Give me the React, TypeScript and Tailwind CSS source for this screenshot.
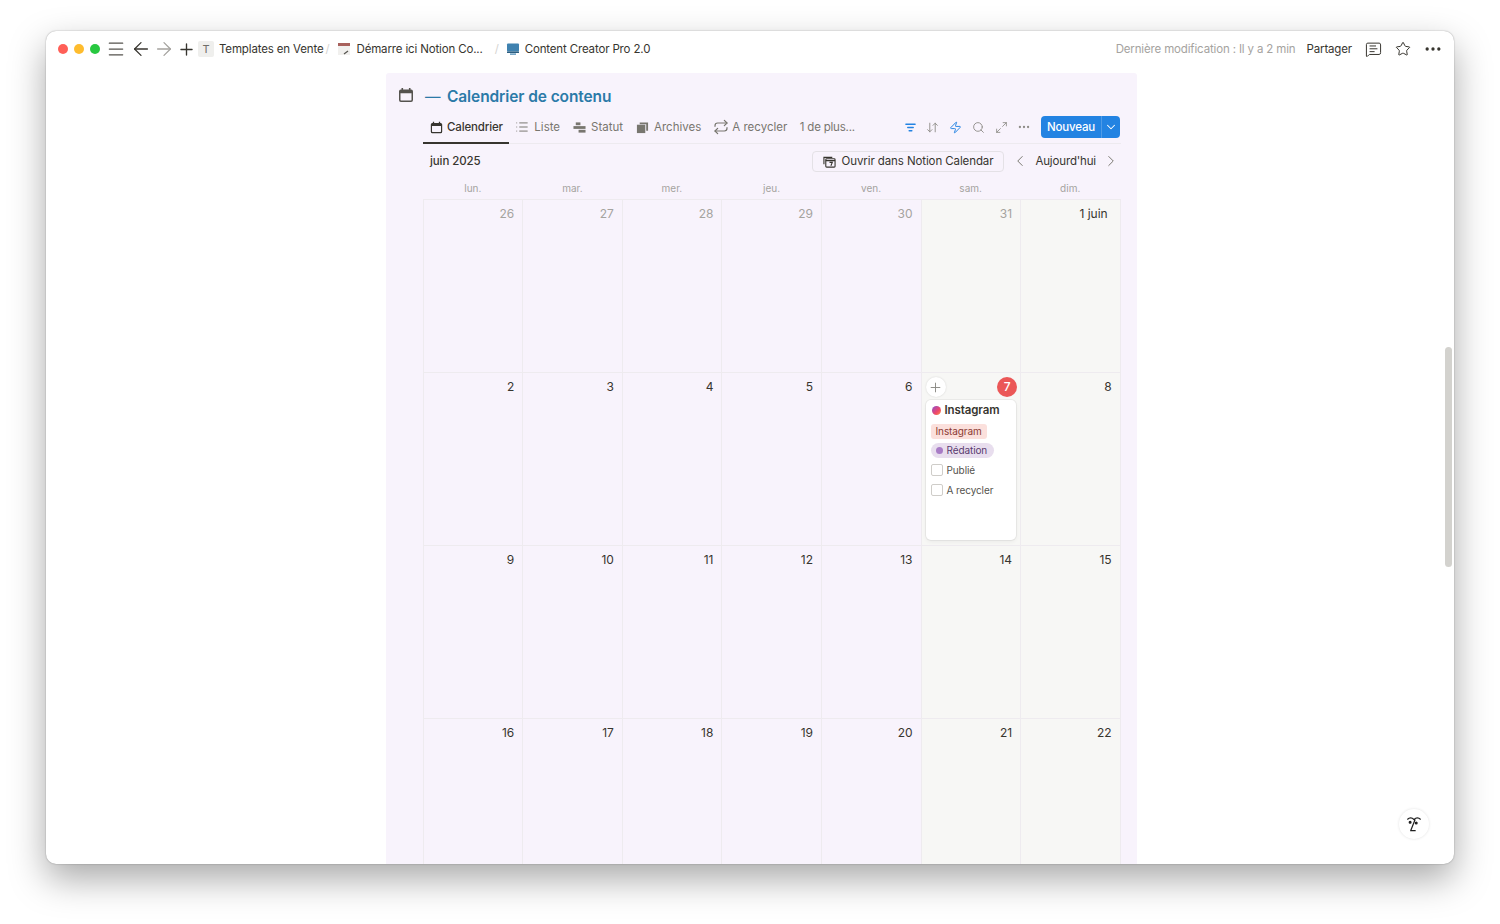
import { ChevronDown, ChevronLeft, ChevronRight, ArrowLeft, ArrowRight, Plus, Menu, Search, Star, MessageSquareText, Ellipsis, Zap, ArrowDownUp, Maximize2, Repeat, List } from 'lucide-react';

const weekDays = ['lun.', 'mar.', 'mer.', 'jeu.', 'ven.', 'sam.', 'dim.'];
const weeks = [
  ['26', '27', '28', '29', '30', '31', '1 juin'],
  ['2', '3', '4', '5', '6', '7', '8'],
  ['9', '10', '11', '12', '13', '14', '15'],
  ['16', '17', '18', '19', '20', '21', '22'],
];

function CalendarIcon({ className }: { className: string }) {
  return (
    <svg viewBox="0 0 16 16" className={className} fill="currentColor">
      <path d="M3.5 1h1.6v1.5h5.8V1h1.6v1.5h.6A1.9 1.9 0 0 1 15 4.4v8.7a1.9 1.9 0 0 1-1.9 1.9H2.9A1.9 1.9 0 0 1 1 13.1V4.4a1.9 1.9 0 0 1 1.9-1.9h.6V1Zm-1 5.2v6.8c0 .3.2.5.5.5h10c.3 0 .5-.2.5-.5V6.200H2.500Z" />
    </svg>
  );
}

function Tab({ icon, label, active }: { icon: React.ReactNode; label: string; active?: boolean }) {
  return (
    <div className={active ? 'relative flex h-[29px] items-center gap-[4px] pl-[7px] pr-[6px] pb-[3px] text-[#37352f]' : 'flex h-[29px] items-center gap-[5px] px-[6.5px] pb-[3px] tracking-normal text-[#78766f]'}>
      {icon}
      <span className={active ? 'pt-[1px] font-medium' : 'pt-[1px]'}>{label}</span>
      {active && <span className="absolute inset-x-0 -bottom-px h-[2px] bg-[#37352f]" />}
    </div>
  );
}

function DayCell({ label, col, row }: { label: string; col: number; row: number }) {
  const weekend = col >= 5;
  const muted = row === 0 && col < 6;
  const today = label === '7';
  return (
    <div className={`relative h-[173px] border-l border-b border-[#eeebef] ${weekend ? 'bg-[#f7f7f5]' : ''}`}>
      {today ? (
        <>
          <div className="flex items-center justify-between pl-[4px] pr-[3px] pt-[4px]">
            <span className="flex h-[20px] w-[20px] items-center justify-center rounded-full bg-white text-[#8a8983] shadow-[0_0_2px_rgba(0,0,0,0.15)]">
              <Plus size={15} strokeWidth={1.5} />
            </span>
            <span className="flex h-[20px] w-[20px] items-center justify-center rounded-full bg-[#eb5757] text-[12px] font-medium text-white">7</span>
          </div>
          <EventCard />
        </>
      ) : (
        <div className={`pt-[5px] text-right text-[12px] ${label === '1 juin' ? 'pr-[12px]' : 'pr-[8px]'} ${muted ? 'text-[#a5a39f]' : 'text-[#37352f]'}`}>{label}</div>
      )}
    </div>
  );
}

function EventCard() {
  return (
    <div className="mx-[4px] mt-[3px] h-[140px] rounded-[5px] bg-white px-[5px] pt-[2px] tracking-[-0.1px] shadow-[0_0_0_1px_rgba(15,15,15,0.05),0_2px_4px_rgba(15,15,15,0.05)]">
      <div className="flex items-center gap-[4px] pl-[1px]">
        <span className="h-[9px] w-[9px] rounded-full bg-[linear-gradient(135deg,#8a4fd0,#f0466a_60%,#f59a42)]" />
        <span className="text-[11.5px] font-semibold text-[#37352f]">Instagram</span>
      </div>
      <div className="mt-[5px] flex">
        <span className="rounded-[3px] bg-[#fbe0dc] px-[5px] text-[10px] leading-[15px] text-[#8b3a33]">Instagram</span>
      </div>
      <div className="mt-[4px] flex">
        <span className="flex items-center gap-[4px] rounded-full bg-[#e8deee] pl-[5px] pr-[7px] text-[10px] leading-[15px] text-[#5a3b6e]">
          <span className="h-[7px] w-[7px] rounded-full bg-[#a87cc6]" />
          Rédation
        </span>
      </div>
      <div className="mt-[5px] flex h-[14px] items-center gap-[4px] text-[10px] text-[#55534e]">
        <span className="h-[12px] w-[12px] rounded-[2px] border border-[#cfcdc9]" />
        Publié
      </div>
      <div className="mt-[6px] flex h-[14px] items-center gap-[4px] text-[10px] text-[#55534e]">
        <span className="h-[12px] w-[12px] rounded-[2px] border border-[#cfcdc9]" />
        A recycler
      </div>
    </div>
  );
}

export default function App() {
  return (
    <div className="h-[924px] overflow-hidden bg-white px-[46px] pt-[31px] font-['Inter',sans-serif]">
      <div className="relative flex h-[833px] flex-col overflow-hidden rounded-[10px] bg-white shadow-[0_0_1.5px_rgba(0,0,0,0.4),0_15px_36px_rgba(0,0,0,0.34)]">
        <header className="flex h-[36px] shrink-0 items-center pl-[12px] pr-[11px] text-[11.5px] tracking-[-0.15px] text-[#37352f]">
          <span className="h-[10px] w-[10px] rounded-full bg-[#ff5f57]" />
          <span className="ml-[6px] h-[10px] w-[10px] rounded-full bg-[#febc2e]" />
          <span className="ml-[6px] h-[10px] w-[10px] rounded-full bg-[#28c840]" />
          <Menu size={20} strokeWidth={1.5} className="ml-[6px] text-[#55534e]" />
          <ArrowLeft size={22} strokeWidth={1.4} className="ml-[4px] text-[#37352f]" />
          <ArrowRight size={22} strokeWidth={1.4} className="ml-[1px] text-[#a5a39f]" />
          <Plus size={19} strokeWidth={1.7} className="ml-[2px] text-[#37352f]" />
          <span className="ml-[2px] flex h-[16px] w-[16px] items-center justify-center rounded-[2px] bg-[#efefed] text-[11px] text-[#6f6e69]">T</span>
          <span className="ml-[5px] pt-[1px]">Templates en Vente</span>
          <span className="ml-[2px] pt-[1px] text-[#d5d4d1]">/</span>
          <svg viewBox="0 0 14 14" className="ml-[8px] h-[14px] w-[14px]">
            <rect x="1" y="1" width="12" height="12" fill="#f1f0ee" />
            <rect x="1" y="1" width="12" height="3" fill="#a8615c" />
            <path d="M7 12l4-3" stroke="#55534e" strokeWidth="1.2" />
          </svg>
          <span className="ml-[5px] pt-[1px]">Démarre ici Notion Co...</span>
          <span className="ml-[12px] pt-[1px] text-[#d5d4d1]">/</span>
          <svg viewBox="0 0 14 14" className="ml-[7px] h-[14px] w-[14px]">
            <rect x="1" y="1.500" width="12" height="8" rx="1" fill="#3f82b0" />
            <rect x="1" y="9.500" width="12" height="1.500" fill="#2b5d80" />
            <rect x="4" y="11.500" width="6" height="1.200" fill="#3f82b0" />
          </svg>
          <span className="ml-[5px] pt-[1px]">Content Creator Pro 2.0</span>
          <span className="ml-auto pt-[1px] text-[#a5a39f]">Dernière modification : Il y a 2 min</span>
          <span className="ml-[11px] pt-[1px]">Partager</span>
          <MessageSquareText size={17} strokeWidth={1.4} className="ml-[13px]" />
          <Star size={16} strokeWidth={1.5} className="ml-[13px]" />
          <Ellipsis size={20} strokeWidth={2} className="ml-[12px]" />
        </header>

        <main className="ml-[340px] mt-[6px] w-[751px] flex-1 rounded-t-[3px] bg-[#f8f3fc] pl-[37px] pr-[16px] text-[11.5px] tracking-[-0.15px]">
          <div className="relative flex h-[41px] items-end pb-[7px] pl-[2px]">
            <CalendarIcon className="absolute -left-[25px] top-[14px] h-[16px] w-[16px] text-[#55534e]" />
            <h1 className="flex text-[15.5px] leading-[20px] font-semibold tracking-[-0.1px] text-[#2b7aa8]">
              <span className="w-[22px] font-normal">—</span>
              Calendrier de contenu
            </h1>
          </div>

          <div className="flex h-[30px] items-start border-b border-[#edeaef]">
            <Tab active label="Calendrier" icon={<CalendarIcon className="h-[13px] w-[13px]" />} />
            <Tab label="Liste" icon={<List size={14} strokeWidth={1.7} />} />
            <Tab
              label="Statut"
              icon={
                <svg viewBox="0 0 14 14" className="h-[13px] w-[13px]" fill="currentColor">
                  <rect x="3" y="1.500" width="5" height="3" />
                  <rect x="0.500" y="5.500" width="13" height="3" />
                  <rect x="6" y="9.500" width="7.500" height="3" />
                </svg>
              }
            />
            <Tab
              label="Archives"
              icon={
                <svg viewBox="0 0 14 14" className="h-[13px] w-[13px]" fill="currentColor">
                  <rect x="1" y="4" width="9" height="9" />
                  <path d="M4 1.500h9v9h-2V3.500H4z" />
                </svg>
              }
            />
            <Tab label="A recycler" icon={<Repeat size={16} strokeWidth={1.8} className="-ml-[1.5px] -mr-[1.5px]" />} />
            <span className="ml-[6px] flex h-[26px] items-center pt-[1px] tracking-[-0.2px] text-[#78766f]">1 de plus...</span>
            <div className="ml-auto mr-[1px] flex h-[26px] items-center text-[#8f8d88]">
              <svg viewBox="0 0 14 14" className="h-[13px] w-[13px] text-[#2383e2]" stroke="currentColor" strokeWidth="1.400" strokeLinecap="round">
                <path d="M2 3.500h10M4 7h6M5.500 10.500h3" />
              </svg>
              <ArrowDownUp size={13} strokeWidth={1.7} className="ml-[9.5px]" />
              <Zap size={13} strokeWidth={1.8} className="ml-[10px] text-[#2383e2]" />
              <Search size={13} strokeWidth={1.7} className="ml-[10px]" />
              <Maximize2 size={13} strokeWidth={1.6} className="ml-[10px]" />
              <Ellipsis size={14} strokeWidth={2} className="ml-[9px]" />
              <div className="ml-[10px] flex h-[22px] w-[79px] items-center rounded-[4px] bg-[#2383e2] font-medium text-white">
                <span className="w-[60px] pt-[1px] text-center">Nouveau</span>
                <span className="flex h-full flex-1 items-center justify-center border-l border-[#ffffff33]">
                  <ChevronDown size={14} strokeWidth={1.8} />
                </span>
              </div>
            </div>
          </div>

          <div className="flex h-[34px] items-center pl-[7px] pr-[1px]">
            <span className="pt-[1px] font-medium tracking-[-0.1px] text-[#37352f]">juin 2025</span>
            <div className="ml-auto flex h-[21px] items-center gap-[6px] rounded-[4px] border border-[#e4e1e6] px-[10px] tracking-[-0.1px] text-[#37352f]">
              <svg viewBox="0 0 14 14" className="h-[13px] w-[13px]" fill="none" stroke="currentColor" strokeWidth="1.200">
                <path d="M1 10V2.500h9" />
                <rect x="3" y="4" width="10" height="9" rx="1" />
                <path d="M3 6h10M7 8h3l-1.500 3.500" />
              </svg>
              <span className="pt-[1px]">Ouvrir dans Notion Calendar</span>
            </div>
            <ChevronLeft size={18} strokeWidth={1.3} className="ml-[7px] text-[#78766f]" />
            <span className="ml-[6px] pt-[1px] text-[#37352f]">Aujourd'hui</span>
            <ChevronRight size={18} strokeWidth={1.3} className="ml-[6px] text-[#78766f]" />
          </div>

          <div className="grid h-[21px] w-[697px] grid-cols-7 items-center pb-[1px] text-center text-[10px] tracking-normal text-[#a5a39f]">
            {weekDays.map((day) => (
              <span key={day}>{day}</span>
            ))}
          </div>

          <div className="-ml-[0.3px] grid w-[698px] grid-cols-[repeat(7,99.57px)] border-t border-r border-[#eeebef] tracking-normal">
            {weeks.map((week, row) =>
              week.map((label, col) => <DayCell key={label} label={label} col={col} row={row} />),
            )}
          </div>
        </main>

        <div className="absolute top-[316px] right-[2px] h-[220px] w-[7px] rounded-full bg-[#d3d2ce]" />
        <button className="absolute right-[25px] bottom-[25px] flex h-[30px] w-[30px] items-center justify-center rounded-full bg-white shadow-[0_0_3px_rgba(0,0,0,0.12)]">
          <svg viewBox="0 0 18 18" className="h-[20px] w-[20px]" fill="none" stroke="#1f1f1f" strokeWidth="1.100">
            <path d="M3 5c2-2 4-2 6 0 2-2 4-2 6 0M5.500 15h5M10 5l-4 10" />
            <circle cx="11" cy="8" r="0.800" fill="#1f1f1f" />
            <circle cx="5.500" cy="7.500" r="0.800" fill="#1f1f1f" />
          </svg>
        </button>
      </div>
    </div>
  );
}
